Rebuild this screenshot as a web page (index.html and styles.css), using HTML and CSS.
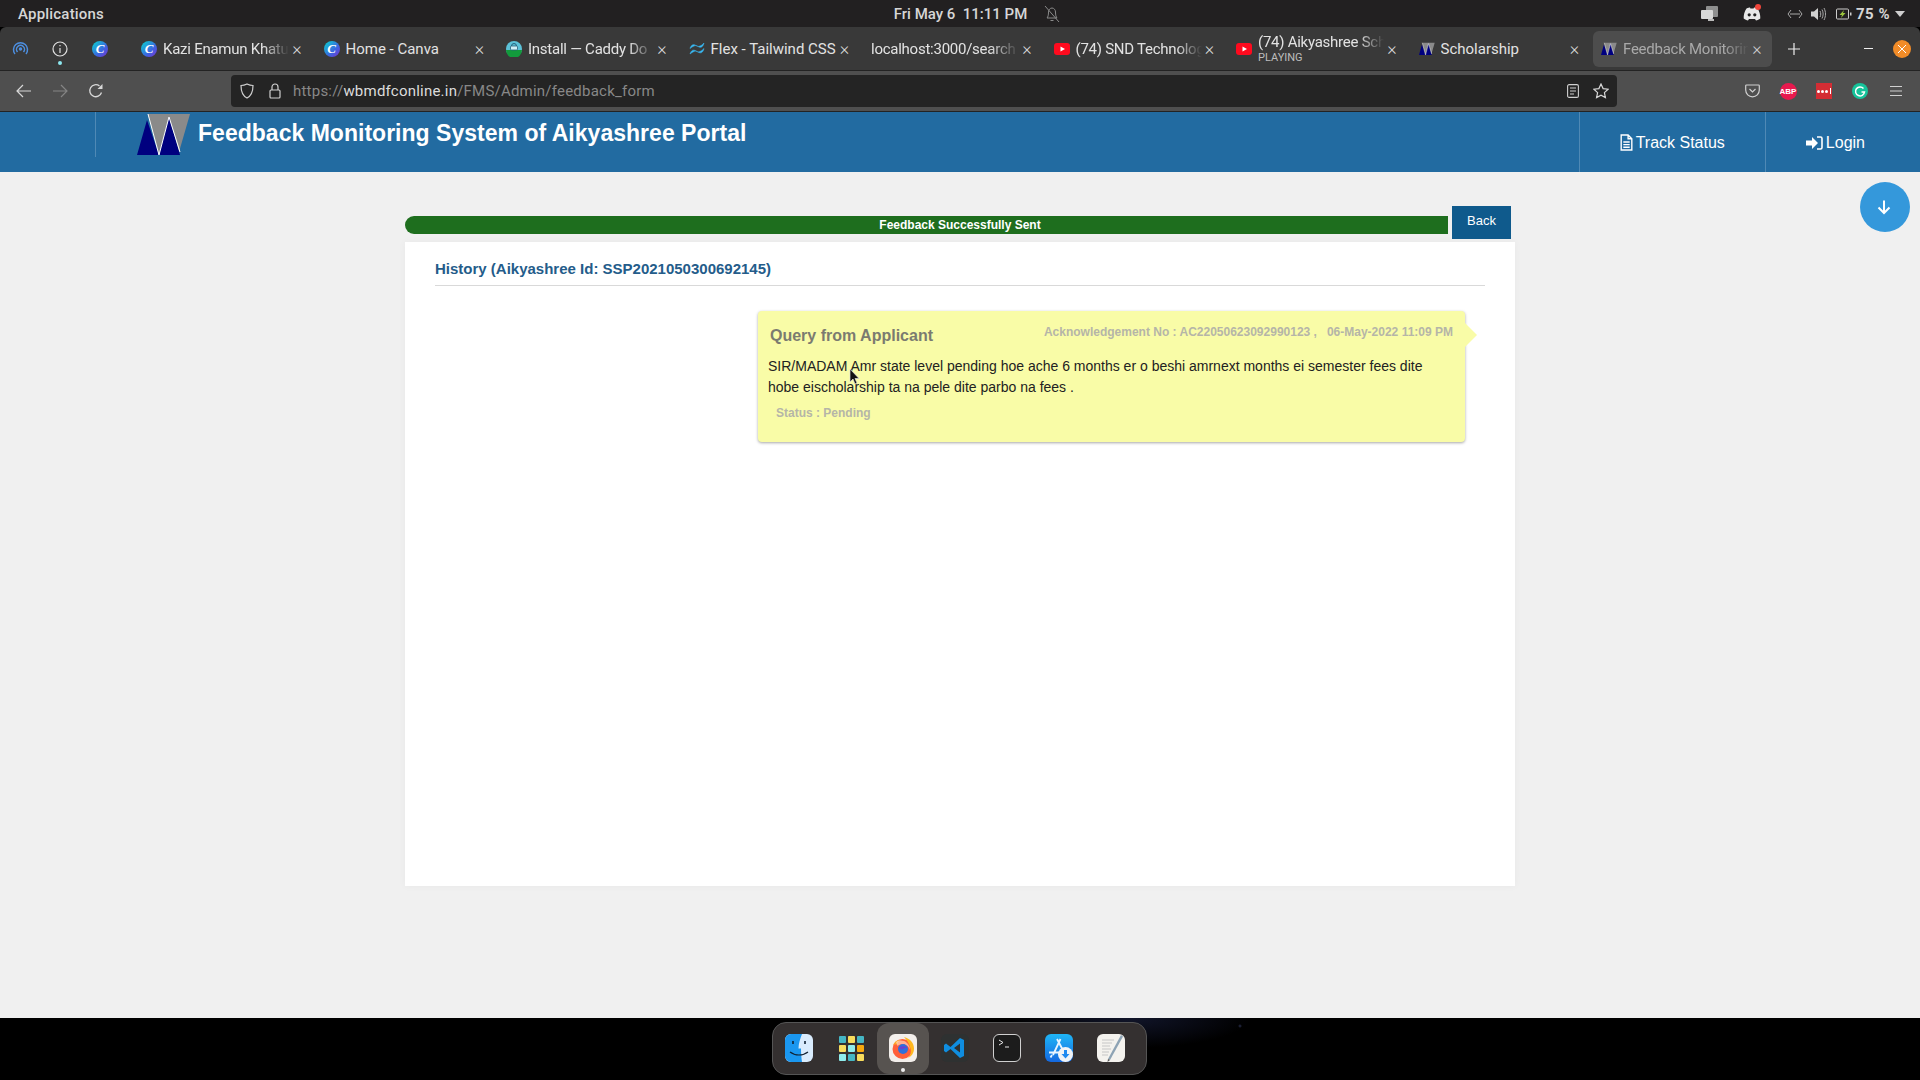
FILE: index.html
```html
<!DOCTYPE html>
<html lang="en">
<head>
<meta charset="utf-8">
<title>Feedback Monitoring System of Aikyashree Portal</title>
<link rel="stylesheet" href="styles.css">
</head>
<body>
<div class="topbar">
  <div class="top-left">Applications</div>
  <div class="top-center">
    <span class="clock">Fri May 6&nbsp;&nbsp;11:11 PM</span>
    <svg class="bell" width="16" height="18" viewBox="0 0 16 18" fill="none" stroke="#8a8a8a" stroke-width="1"><path d="M3 13c1-1 1.500-3 1.500-6 0-2 1.500-4 3.500-4s3.500 2 3.500 4c0 3 .5 5 1.500 6zM6.500 15.500h3M1 1l14 16"/></svg>
  </div>
  <div class="top-right">
    <svg class="tr-win" width="18" height="16" viewBox="0 0 18 16"><rect x="5" y="0" width="12" height="11" rx="1" fill="#8f8f8f"/><rect x="0" y="4" width="12" height="9" rx="1" fill="#d8d8d8"/><rect x="7" y="13" width="6" height="2" fill="#bbb"/></svg>
    <span class="tr-discord">
      <svg width="18" height="14" viewBox="0 0 18 14"><path d="M3.500 1.500C5 .8 6.500.6 7 .6l.4.8h3.200l.4-.8c.5 0 2 .2 3.500.9C16.500 4.500 17.500 8 17.300 11.500 15.800 12.600 14.500 13.200 13 13.400l-1-1.500H6l-1 1.500C3.500 13.200 2.200 12.600.7 11.500.5 8 1.500 4.500 3.500 1.500z" fill="#e8e8e8"/><circle cx="6.200" cy="7.800" r="1.600" fill="#222"/><circle cx="11.800" cy="7.800" r="1.600" fill="#222"/></svg>
      <i class="dot-red"></i>
    </span>
    <svg class="tr-net" width="16" height="10" viewBox="0 0 16 10" fill="none" stroke="#aaa"><path d="M4 1L1 5l3 4M12 1l3 4-3 4M3 5h10"/></svg>
    <svg class="tr-vol" width="16" height="14" viewBox="0 0 16 14"><path d="M0 4.500h3L7 1v12L3 9.500H0z" fill="#d0d0d0"/><path d="M9 4c1 2 1 4 0 6M11 2.500c1.500 3 1.500 6 0 9M13 1c2 4 2 8 0 12" stroke="#aaa" fill="none"/></svg>
    <svg class="tr-bat" width="16" height="12" viewBox="0 0 16 12"><rect x=".5" y="1" width="12" height="10" rx="1" fill="none" stroke="#ccc"/><rect x="14" y="4.500" width="1.500" height="3" fill="#ccc"/><path d="M8 2L3.500 7H6l-1 3 4.500-5H7z" fill="#9bc53d"/></svg>
    <span class="battery">75 %</span>
    <i class="caret"></i>
  </div>
</div>

<div class="tabbar">
  <div class="pin">
    <svg width="17" height="16" viewBox="0 0 17 16" fill="none" stroke="#4d8fe0" stroke-width="1.500"><path d="M3 13A7 7 0 1 1 14 13"/><path d="M5.500 11A4 4 0 1 1 11.500 11"/><circle cx="8.500" cy="8" r="1" fill="#4d8fe0"/></svg>
  </div>
  <div class="pin pin-info">
    <svg width="16" height="16" viewBox="0 0 16 16" fill="none" stroke="#e0e0e0" stroke-width="1.200"><circle cx="8" cy="8" r="7"/><path d="M8 7v5M8 4v1.300"/></svg>
    <i class="pin-dot"></i>
  </div>
  <div class="pin"><span class="fav fav-canva">C</span></div>
  <div class="tabs">
    <div class="tab">
      <span class="fav fav-canva">C</span>
      <span class="tab-text fade">Kazi Enamun Khatu</span>
      <span class="x">×</span>
    </div>
    <div class="tab">
      <span class="fav fav-canva">C</span>
      <span class="tab-text">Home - Canva</span>
      <span class="x">×</span>
    </div>
    <div class="tab">
      <svg class="fav" width="16" height="16" viewBox="0 0 16 16"><circle cx="8" cy="8" r="8" fill="#5cc2d8"/><path d="M0 9h16a8 8 0 0 1-16 0z" fill="#129a3c"/><rect x="4.500" y="5" width="7" height="4" rx="1" fill="#cfeff5" stroke="#26607a" stroke-width=".8"/><path d="M5.500 5a2.500 2.500 0 0 1 5 0" fill="none" stroke="#26607a"/></svg>
      <span class="tab-text fade">Install — Caddy Do</span>
      <span class="x">×</span>
    </div>
    <div class="tab">
      <svg class="fav" width="16" height="16" viewBox="0 0 16 16"><g fill="#38bdf8" stroke="#38bdf8" stroke-width=".5"><path d="M1 7.500c1-3.500 3-4.500 5-3.500 2 1 3 2 5 1 1.500-.5 2.500-1.500 4-3-1 4-3 5-5 4-2-1-3-2-5-1-1.500.5-2.500 1.500-4 2.500z"/><path d="M1 13c1-3.500 3-4.500 5-3.500 2 1 3 2 5 1 1.500-.5 2.500-1.500 4-3-1 4-3 5-5 4-2-1-3-2-5-1-1.500.5-2.500 1.500-4 2.500z"/></g></svg>
      <span class="tab-text">Flex - Tailwind CSS</span>
      <span class="x">×</span>
    </div>
    <div class="tab">
      <span class="tab-text fade">localhost:3000/search</span>
      <span class="x">×</span>
    </div>
    <div class="tab">
      <svg class="fav" width="16" height="16" viewBox="0 0 16 16"><rect y="2" width="16" height="12" rx="3" fill="#ff0a1e"/><path d="M6.500 5.500v5L11 8z" fill="#fff"/></svg>
      <span class="tab-text fade">(74) SND Technolog</span>
      <span class="x">×</span>
    </div>
    <div class="tab">
      <svg class="fav" width="16" height="16" viewBox="0 0 16 16"><rect y="2" width="16" height="12" rx="3" fill="#ff0a1e"/><path d="M6.500 5.500v5L11 8z" fill="#fff"/></svg>
      <span class="tab-stack">
        <span class="tab-text fade">(74) Aikyashree Sch</span>
        <span class="playing">PLAYING</span>
      </span>
      <span class="x">×</span>
    </div>
    <div class="tab">
      <svg class="fav" width="16" height="16" viewBox="17 6 54 42"><path d="M28 6h42l-11 38-10-35-10 38z" fill="#8a8a8a"/><path d="M17 47L27 12l12 35 10-38 11 38z" fill="#00007f"/><path d="M28 6l11 41L49 9l11 35" fill="none" stroke="#fff" stroke-width="1.500"/></svg>
      <span class="tab-text">Scholarship</span>
      <span class="x">×</span>
    </div>
    <div class="tab active">
      <svg class="fav" width="16" height="16" viewBox="17 6 54 42"><path d="M28 6h42l-11 38-10-35-10 38z" fill="#8a8a8a"/><path d="M17 47L27 12l12 35 10-38 11 38z" fill="#00007f"/><path d="M28 6l11 41L49 9l11 35" fill="none" stroke="#fff" stroke-width="1.500"/></svg>
      <span class="tab-text fade">Feedback Monitorin</span>
      <span class="x">×</span>
    </div>
  </div>
  <div class="newtab">
    <svg width="14" height="14" viewBox="0 0 14 14" stroke="#eee" stroke-width="1.200"><path d="M7 1v12M1 7h12"/></svg>
  </div>
  <div class="winctl">
    <i class="minimize"></i>
    <span class="winclose">
      <svg width="10" height="10" viewBox="0 0 10 10" stroke="#fff" stroke-width="1"><path d="M1 1l8 8M9 1l-8 8"/></svg>
    </span>
  </div>
</div>

<div class="toolbar">
  <div class="slot">
    <svg width="16" height="14" viewBox="0 0 16 14" fill="none" stroke="#d8d8d8" stroke-width="1.200"><path d="M15 7H1M7 1L1 7l6 6"/></svg>
  </div>
  <div class="slot">
    <svg width="16" height="14" viewBox="0 0 16 14" fill="none" stroke="#858585" stroke-width="1.200"><path d="M1 7h14M9 1l6 6-6 6"/></svg>
  </div>
  <div class="slot">
    <svg width="16" height="16" viewBox="0 0 16 16" fill="none" stroke="#d8d8d8" stroke-width="1.300"><path d="M13.500 9.500A6 6 0 1 1 11.500 3"/><path d="M14.500 1v5h-5z" fill="#d8d8d8" stroke="none"/></svg>
  </div>
  <div class="urlbar">
    <svg class="u-shield" width="14" height="16" viewBox="0 0 14 16" fill="none" stroke="#cfcfcf" stroke-width="1.200"><path d="M7 1c2 1 4 1.500 6 1.500C13 9 11 13 7 15 3 13 1 9 1 2.500 3 2.500 5 2 7 1z"/></svg>
    <svg class="u-lock" width="12" height="16" viewBox="0 0 12 16" fill="none" stroke="#cfcfcf" stroke-width="1.200"><rect x="1" y="7" width="10" height="8" rx="1"/><path d="M3 7V4a3 3 0 0 1 6 0v3"/></svg>
    <span class="url"><span class="url-dim">https://</span><span class="url-host">wbmdfconline.in</span><span class="url-dim">/FMS/Admin/feedback_form</span></span>
    <svg class="u-reader" width="12" height="14" viewBox="0 0 12 14" fill="none" stroke="#cfcfcf" stroke-width="1.100"><rect x=".6" y=".6" width="10.800" height="12.800" rx="1.500"/><path d="M3 4h6M3 7h6M3 10h4"/></svg>
    <svg class="u-star" width="16" height="16" viewBox="0 0 16 16" fill="none" stroke="#d8d8d8" stroke-width="1.200"><path d="M8 1l2.100 4.600 5 .6-3.700 3.400 1 4.900L8 12.100l-4.400 2.400 1-4.900L.9 6.200l5-.6z"/></svg>
  </div>
  <div class="tools">
    <div class="slot">
      <svg width="15" height="14" viewBox="0 0 15 14" fill="none" stroke="#d0d0d0" stroke-width="1.200"><path d="M1.500 1h12c.5 0 .8.300.8.800V6a6.800 6.800 0 0 1-13.600 0V1.800c0-.5.300-.8.800-.8z"/><path d="M4.500 5l3 3 3-3"/></svg>
    </div>
    <div class="slot"><span class="abp">ABP</span></div>
    <div class="slot">
      <span class="lastpass"><i></i><i></i><i></i><b></b></span>
    </div>
    <div class="slot">
      <svg width="16" height="16" viewBox="0 0 16 16"><circle cx="8" cy="8" r="8" fill="#15c39a"/><path d="M11.500 5.500A4.500 4.500 0 1 0 12.500 9H9.500" fill="none" stroke="#fff" stroke-width="1.500"/></svg>
    </div>
    <div class="slot">
      <svg width="14" height="12" viewBox="0 0 14 12" stroke="#d0d0d0" stroke-width="1.200"><path d="M1 1.500h12M1 6h12M1 10.500h12"/></svg>
    </div>
  </div>
</div>

<header class="site-header">
  <div class="brand">
    <svg class="logo" width="54" height="42" viewBox="17 6 54 42"><path d="M28 6h42l-11 38-10-35-10 38z" fill="#8a8a8a"/><path d="M17 47L27 12l12 35 10-38 11 38z" fill="#00007f"/><path d="M28 6l11 41L49 9l11 35" fill="none" stroke="#fff" stroke-width="1"/></svg>
    <h1 class="site-title">Feedback Monitoring System of Aikyashree Portal</h1>
  </div>
  <nav class="site-nav">
    <a class="nav-item">
      <svg width="13" height="17" viewBox="0 0 12 16" fill="none" stroke="#fff" stroke-width="1.300"><path d="M1 1h6.500L11 4.500V15H1zM7.500 1v3.500H11"/><path d="M3 7.500h6M3 10h6M3 12.500h6"/></svg>
      Track Status
    </a>
    <a class="nav-item">
      <svg width="17" height="14" viewBox="0 0 17 14"><path d="M0 4.500h6V1l6 6-6 6V9.500H0z" fill="#fff"/><path d="M11 1h3.500c.8 0 1.500.7 1.500 1.500v9c0 .8-.7 1.500-1.500 1.500H11" fill="none" stroke="#fff" stroke-width="1.600"/></svg>
      Login
    </a>
  </nav>
</header>

<main class="page">
  <div class="container">
    <div class="status-row">
      <div class="alert-bar">Feedback Successfully Sent</div>
      <button class="back-btn">Back</button>
    </div>
    <section class="card">
      <h2 class="card-title">History (Aikyashree Id: SSP2021050300692145)</h2>
      <article class="bubble">
        <div class="bubble-head">
          <span class="bubble-title">Query from Applicant</span>
          <span class="bubble-meta">Acknowledgement No : AC22050623092990123 ,&nbsp;&nbsp; 06-May-2022 11:09 PM</span>
        </div>
        <p class="bubble-body">SIR/MADAM Amr state level pending hoe ache 6 months er o beshi amrnext months ei semester fees dite hobe eischolarship ta na pele dite parbo na fees .</p>
        <div class="bubble-status">Status : Pending</div>
      </article>
    </section>
  </div>
  <button class="scroll-btn">
    <svg width="16" height="16" viewBox="0 0 16 16" fill="none" stroke="#fff" stroke-width="2"><path d="M8 1.500v12.500M2.500 8.500L8 14l5.500-5.500"/></svg>
  </button>
  <svg class="cursor" width="11" height="17" viewBox="0 0 11 17"><path d="M1 1v13l3-3 2 5 2-1-2-4.500h4z" fill="#111" stroke="#ddd" stroke-width=".7"/></svg>
</main>

<footer class="desktop">
  <div class="dock">
    <div class="dock-item">
      <svg width="28" height="28" viewBox="0 0 28 28"><rect width="28" height="28" rx="6" fill="#d9ecfd"/><path d="M6 0h11c-2 5-3.500 10-3.500 14.500H16c0 4 .3 9 1 13.500H6a6 6 0 0 1-6-6V6a6 6 0 0 1 6-6z" fill="#1a97f0"/><path d="M8 7v3M20 7v3" stroke="#123" stroke-width="1.600"/><path d="M5 18c5 4 13 4 18 0" fill="none" stroke="#123" stroke-width="1.200"/></svg>
    </div>
    <div class="dock-item">
      <div class="launch">
        <i class="c-teal"></i><i class="c-yellow"></i><i class="c-teal"></i>
        <i class="c-yellow"></i><i class="c-cyan"></i><i class="c-orange"></i>
        <i class="c-cyan"></i><i class="c-teal"></i><i class="c-yellow"></i>
      </div>
    </div>
    <div class="dock-item current">
      <svg width="28" height="28" viewBox="0 0 28 28"><rect width="28" height="28" rx="6" fill="#f3efeb"/><circle cx="13.500" cy="15" r="10" fill="#ff5f3a"/><path d="M15 3c6 1.500 10 6 10 11.500 0 4.500-2.500 8-6 9.500 2.500-2.500 3.500-6 2.500-9.500C20.500 10 18 6 15 3z" fill="#ffb81f"/><path d="M4 11c1.500-3.500 4.500-5.500 8-5-2.500 1-3.500 2.500-3.500 4.500-2 0-3.500 0-4.500.5z" fill="#ffa32a"/><path d="M7 8c3-2 8-2 11 1 2 2 3 4 3 7-1-3-3-5-6-5.500-2.500-.5-5 0-6.500 1.500z" fill="#fff1e0" opacity=".55"/><circle cx="14" cy="15" r="5" fill="#2f6fdc"/><path d="M9.500 13.500c3-1.800 6.500-1.800 9 .2-2 0-4 .8-5 1.800-1.800 0-3.200-1-4-2z" fill="#6b3fd0"/></svg>
      <i class="dock-dot"></i>
    </div>
    <div class="dock-item">
      <svg width="28" height="28" viewBox="0 0 28 28"><rect width="28" height="28" rx="6" fill="#2e3131"/><path d="M19 4L9.500 13 5 9.500 3 11v6l2 1.500 4.500-3.500L19 24l4-2V6zM19 9.500L13 14l6 4.500z" fill="#0f8ee0" fill-rule="evenodd"/></svg>
    </div>
    <div class="dock-item">
      <div class="term"><svg width="14" height="10" viewBox="0 0 14 10" fill="none" stroke="#e8e8e8" stroke-width="1"><path d="M1 1l4 2.500L1 6M7 8h4"/></svg></div>
    </div>
    <div class="dock-item appstore-wrap">
      <svg width="28" height="28" viewBox="0 0 28 28"><defs><linearGradient id="asg" x1="0" y1="0" x2="0" y2="1"><stop offset="0" stop-color="#1fb6f6"/><stop offset="1" stop-color="#1468e0"/></linearGradient></defs><rect width="28" height="28" rx="6" fill="url(#asg)"/><path d="M15.500 5L8 21M12 5l8 15M4 18.500h16M7 21l-1.500 2.500" stroke="#e8f4ff" stroke-width="1.800" fill="none"/><circle cx="20.500" cy="20.500" r="7.500" fill="#f0f3f6"/><path d="M19 16h3v4h2.500l-4 4.500-4-4.500H19z" fill="#1f8af0"/></svg>
    </div>
    <div class="dock-item">
      <svg width="28" height="28" viewBox="0 0 28 28"><rect width="28" height="28" rx="6" fill="#f4f2ee"/><path d="M5 6h12M5 9h10M5 12h8M5 15h9M5 18h7M5 21h6" stroke="#c6c6c6"/><path d="M24 1l2 1.500L13 26l-2-1z" fill="#8ea3b4"/><path d="M11 25l2 1-2.500 2z" fill="#555"/></svg>
    </div>
  </div>
</footer>
</body>
</html>
```
FILE: styles.css
```css
* { box-sizing: border-box; }
html, body { margin: 0; padding: 0; height: 100%; }
body {
  width: 1920px;
  height: 1080px;
  overflow: hidden;
  display: flex;
  flex-direction: column;
  font-family: "Liberation Sans", Arial, sans-serif;
  background: #000;
}
i { display: block; }

/* GNOME top bar */
.topbar {
  height: 27px;
  flex: none;
  background: #222021;
  color: #d6d6d6;
  font-family: Roboto, sans-serif;
  font-size: 15px;
  font-weight: 500;
  display: grid;
  grid-template-columns: 1fr auto 1fr;
  align-items: center;
}
.top-left { padding-left: 18px; letter-spacing: .2px; }
.top-center { display: flex; align-items: center; padding-left: 34px; }
.bell { margin-left: 17px; }
.top-right { display: flex; align-items: center; justify-content: flex-end; padding-right: 15px; }
.tr-win { margin-right: 24px; }
.tr-discord { position: relative; display: flex; margin-right: 26px; }
.dot-red { position: absolute; top: -3px; right: 0; width: 6px; height: 6px; border-radius: 50%; background: #f0453a; }
.tr-net { margin-right: 8px; }
.tr-vol { margin-right: 9px; }
.tr-bat { margin-right: 4px; }
.battery { font-size: 15px; font-weight: 700; letter-spacing: .5px; }
.caret { margin-left: 5px; width: 0; height: 0; border: 5px solid transparent; border-top: 6px solid #cfcfcf; border-bottom: 0; }

/* Tab strip */
.tabbar {
  height: 44px;
  flex: none;
  background: #393939;
  border-bottom: 1px solid #232323;
  border-radius: 6px 6px 0 0;
  display: flex;
  align-items: center;
  color: #e2e2e2;
  font-family: Roboto, sans-serif;
  font-size: 15px;
}
.pin { width: 40px; height: 36px; display: flex; align-items: center; justify-content: center; position: relative; flex: none; }
.pin-dot { position: absolute; left: 18px; bottom: 2px; width: 4px; height: 4px; border-radius: 50%; background: #8de8f0; }
.tabs { display: flex; gap: 3.5px; margin-left: 13px; flex: none; }
.tab {
  width: 179px;
  height: 36px;
  padding: 0 8px;
  display: flex;
  align-items: center;
  border-radius: 6px;
  flex: none;
}
.tab.active { background: #4d4d4d; color: #a9a9a9; }
.fav { width: 16px; height: 16px; flex: none; margin-right: 6px; }
.pin .fav { margin-right: 0; }
.fav-canva {
  border-radius: 50%;
  background: linear-gradient(135deg, #10c7d2 10%, #3b66e0 60%, #7a2fd0);
  color: #fff;
  font: italic 700 13px/16px "Liberation Serif", serif;
  text-align: center;
}
.tab-text { flex: 1; min-width: 0; padding-top: 1px; overflow: hidden; white-space: nowrap; display: block; }
.fade { letter-spacing: -.25px; -webkit-mask-image: linear-gradient(to right, #000 80%, transparent); mask-image: linear-gradient(to right, #000 80%, transparent); }
.tab-stack { flex: 1; min-width: 0; display: flex; flex-direction: column; line-height: 17px; }
.tab-stack .tab-text { flex: none; padding-top: 0; }
.playing { font-size: 11px; line-height: 13px; color: #bdbdbd; }
.x { width: 16px; flex: none; margin-right: -1px; text-align: center; font-size: 18px; line-height: 16px; font-weight: 300; color: #d8d8d8; }
.tab.active .x { color: #cfcfcf; }
.newtab { margin-left: 15px; width: 14px; display: flex; }
.winctl { margin-left: auto; display: flex; align-items: center; padding-right: 9px; }
.minimize { width: 9px; height: 1px; background: #eee; margin-right: 20px; }
.winclose { width: 18px; height: 18px; border-radius: 50%; background: #f28c28; display: flex; align-items: center; justify-content: center; }

/* Nav toolbar */
.toolbar {
  height: 41px;
  flex: none;
  background: #4f4f4f;
  border-bottom: 1px solid #232323;
  padding: 0 6px;
  display: flex;
  align-items: center;
}
.slot { width: 36px; height: 32px; display: flex; align-items: center; justify-content: center; flex: none; }
.urlbar {
  margin-left: 117px;
  width: 1386px;
  height: 32px;
  background: #242424;
  border-radius: 4px;
  display: flex;
  align-items: center;
  padding: 0 8px 0 9px;
  font-family: Roboto, sans-serif;
  font-size: 15px;
}
.u-shield { margin-right: 15px; flex: none; }
.u-lock { margin-right: 12px; flex: none; }
.url { flex: 1; letter-spacing: .22px; }
.url-dim { color: #888; }
.url-host { color: #dcdcdc; }
.u-reader { margin-right: 14px; }
.tools { margin-left: auto; display: flex; }
.abp {
  width: 17px; height: 17px; border-radius: 50%;
  background: #e8194e; color: #fff;
  font: 700 8px/17px "Liberation Sans", sans-serif;
  text-align: center;
}
.lastpass {
  width: 16px; height: 16px; background: #d32d34;
  display: flex; align-items: center; justify-content: center; gap: 1px;
}
.lastpass i { width: 3px; height: 3px; border-radius: 50%; background: #fff; }
.lastpass b { width: 1px; height: 6px; background: #fff; margin-left: 1px; }

/* Site header */
.site-header {
  height: 60px;
  flex: none;
  background: #226ba1;
  display: flex;
  justify-content: space-between;
  color: #fff;
}
.brand { display: flex; align-items: flex-start; height: 45px; margin-left: 95px; padding-left: 41px; padding-top: 2px; border-left: 1px solid #4f89b5; }
.logo { flex: none; }
.site-title { margin: 3px 0 0 7px; font-size: 23px; line-height: 32px; font-weight: 700; white-space: nowrap; letter-spacing: .02px; }
.site-nav { display: flex; padding-right: 15px; }
.nav-item {
  padding: 1px 40px 0;
  display: flex;
  align-items: center;
  gap: 3px;
  font-size: 16px;
  border-left: 1px solid #4f89b5;
}

/* Page */
.page {
  flex: 1;
  background: #f0f0f0;
  position: relative;
  display: flex;
  justify-content: center;
  padding-top: 34px;
  min-height: 0;
}
.container { width: 1110px; }
.status-row { display: flex; align-items: flex-start; height: 36px; }
.alert-bar {
  margin-top: 10px;
  width: 1043px;
  height: 18px;
  background: #1e6e1e;
  border-radius: 9px 0 0 9px;
  color: #fff;
  font-size: 12px;
  line-height: 18px;
  font-weight: 700;
  text-align: center;
  padding-left: 67px;
}
.back-btn {
  margin-left: 4px;
  width: 59px;
  height: 33px;
  border: 0;
  padding: 0 0 4px;
  background: #0f5a8c;
  color: #fff;
  font-family: "Liberation Sans", sans-serif;
  font-size: 13px;
}
.card {
  height: 644px;
  background: #fff;
  padding: 0 30px;
  box-shadow: 0 0 8px rgba(0,0,0,.04);
}
.card-title {
  margin: 0;
  height: 44px;
  padding-top: 17px;
  border-bottom: 1px solid #d9d9d9;
  color: #245c8a;
  font-size: 15px;
  line-height: 20px;
  font-weight: 700;
}
.bubble {
  position: relative;
  margin: 25px 0 0 323px;
  width: 707px;
  height: 131px;
  background: #f9fca7;
  border-radius: 4px;
  box-shadow: 0 1px 3px rgba(0,0,0,.35);
  padding: 14px 12px 0 10px;
}
.bubble::after {
  content: "";
  position: absolute;
  left: 100%;
  top: 12px;
  border-left: 12px solid #f9fca7;
  border-top: 12.500px solid transparent;
  border-bottom: 12.500px solid transparent;
}
.bubble-head { display: flex; justify-content: space-between; align-items: flex-start; padding-left: 2px; }
.bubble-title { font-size: 16px; line-height: 22px; font-weight: 700; color: #7b7b70; }
.bubble-meta { font-size: 12px; line-height: 14px; font-weight: 700; color: #b5b5a8; }
.bubble-body { margin: 9px 0 0; font-size: 14px; line-height: 21px; color: #222; }
.bubble-status { margin: 5px 0 0 8px; font-size: 12px; line-height: 20px; font-weight: 700; color: #b5b5a8; }
.scroll-btn {
  position: absolute;
  left: 1860px;
  top: 10px;
  width: 50px;
  height: 50px;
  border: 0;
  padding: 0 2px 0 0;
  border-radius: 50%;
  background: #3498db;
  display: flex;
  align-items: center;
  justify-content: center;
}
.cursor { position: absolute; left: 849px; top: 196px; }

/* Desktop + dock */
.desktop {
  height: 62px;
  flex: none;
  display: flex;
  justify-content: center;
  padding: 4px 1px 0 0;
  background-color: #000;
  background-image:
    radial-gradient(circle at 1240px 8px, #2a3050 0, transparent 2px),
    radial-gradient(ellipse 120px 30px at 1130px 0, #11152a, transparent);
}
.dock {
  width: 375px;
  height: 53px;
  background: #343030;
  border: 1px solid #555;
  border-radius: 14px;
  display: flex;
  padding-right: 9px;
}
.dock-item {
  width: 52px;
  height: 100%;
  display: flex;
  align-items: center;
  justify-content: center;
  position: relative;
  padding-bottom: 1px;
}
.dock-item.current { background: #575350; border-radius: 12px; }
.dock-dot { position: absolute; left: 24px; bottom: 2px; width: 4px; height: 4px; border-radius: 50%; background: #eee; }
.launch { display: grid; grid-template-columns: repeat(3, 7px); gap: 2px; width: 25px; }
.launch i { height: 7px; border-radius: 1px; }
.c-teal { background: #45b6c4; }
.c-yellow { background: #f8dc5c; }
.c-cyan { background: #8fecec; }
.c-orange { background: #f8a90e; }
.term {
  width: 28px; height: 28px;
  background: #1c1c1c;
  border: 1px solid #d0d0d0;
  border-radius: 6px;
  padding: 4px 0 0 4px;
  display: flex;
  align-items: flex-start;
}
```
